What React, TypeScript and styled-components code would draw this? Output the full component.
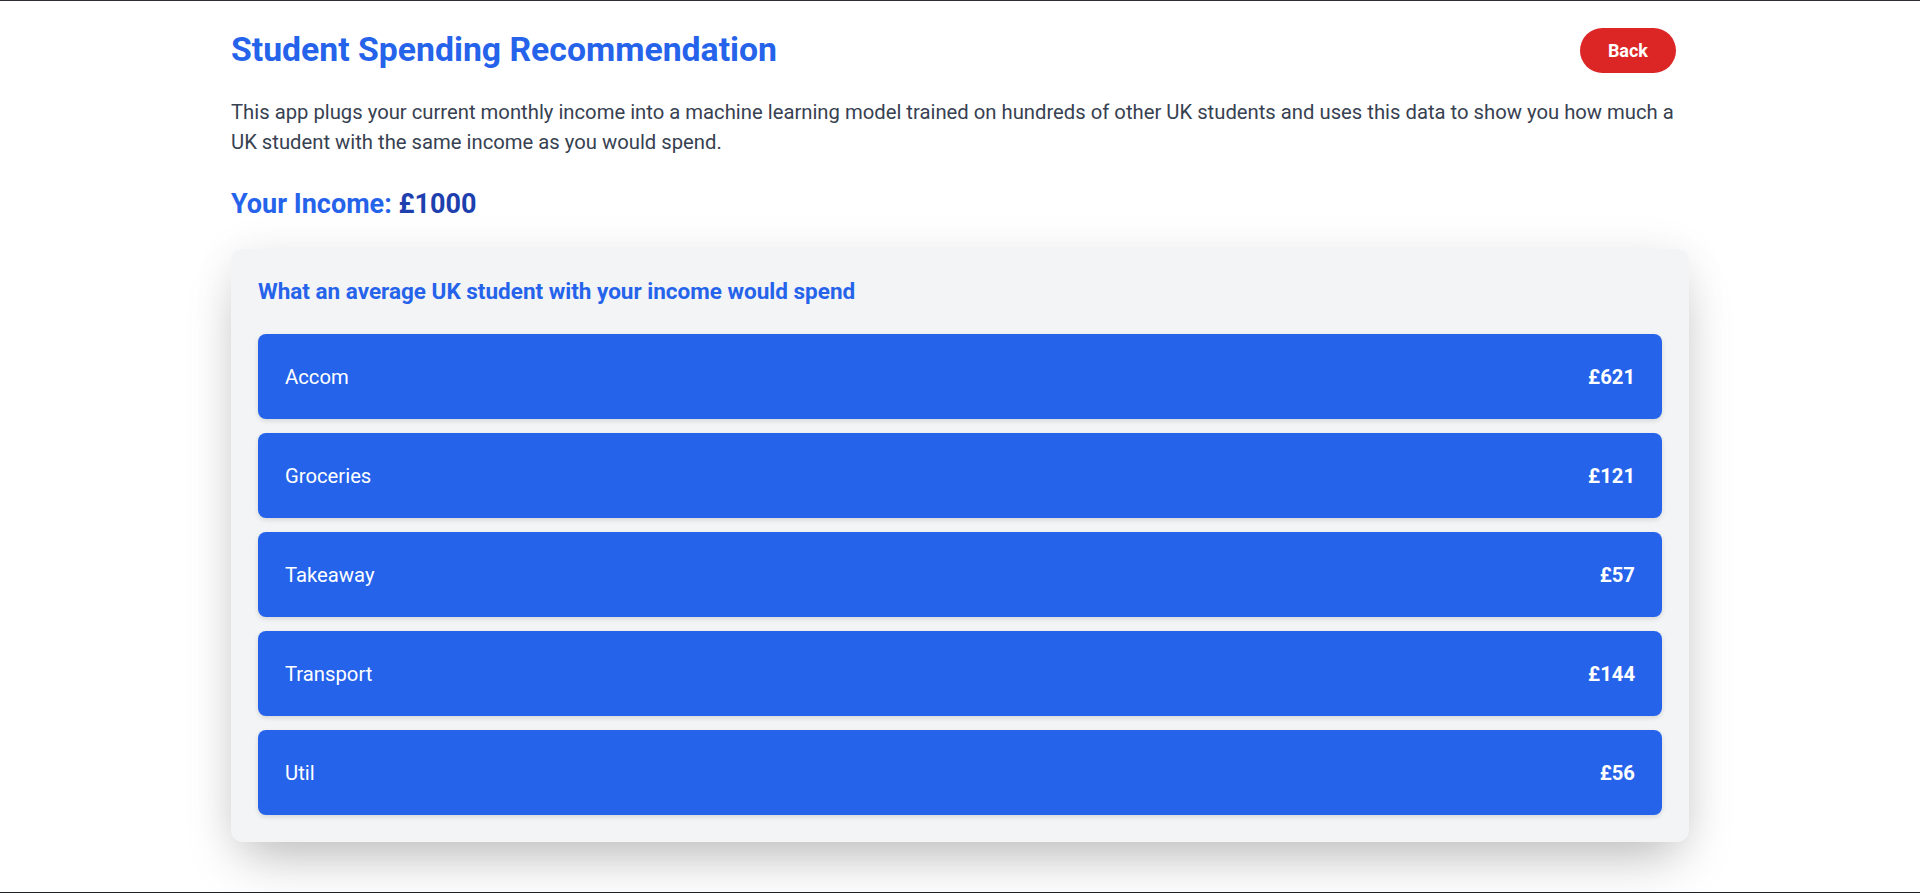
import styled, { createGlobalStyle } from "styled-components";

const GlobalStyle = createGlobalStyle`
  html, body {
    margin: 0;
    padding: 0;
    background: #ffffff;
  }
  body {
    font-family: Roboto, "Liberation Sans", Arial, sans-serif;
  }
  * {
    box-sizing: border-box;
  }
`

const Screen = styled.div`
  min-height: 893px;
  border-top: 1px solid #2b2f33;
  border-bottom: 1px solid #1e2328;
  padding: 27px 0 0;
`

const Wrapper = styled.main`
  width: 1458px;
  margin: 0 auto;
`

const Intro = styled.section`
  padding-right: 13px;
`

const TopBar = styled.header`
  display: flex;
  align-items: center;
  justify-content: space-between;
  height: 45px;
`

const Title = styled.h1`
  margin: 0;
  font-size: 33.75px;
  line-height: 40.5px;
  font-weight: 700;
  color: #2563eb;
`

const BackButton = styled.button`
  height: 45px;
  padding: 0 28px;
  border: none;
  border-radius: 9999px;
  background: #dc2626;
  color: #ffffff;
  font-family: inherit;
  font-size: 18px;
  font-weight: 700;
  cursor: pointer;
`

const Blurb = styled.p`
  margin: 24px 0 0;
  font-size: 20.25px;
  line-height: 30px;
  color: #374151;
`

const Income = styled.h2`
  margin: 29px 0 0;
  font-size: 27px;
  line-height: 36px;
  font-weight: 700;
  color: #2563eb;

  span {
    color: #1e40af;
  }
`

const Card = styled.section`
  margin-top: 27px;
  padding: 27px;
  background: #f3f4f6;
  border-radius: 12px;
  box-shadow: 0 25px 50px -12px rgba(0, 0, 0, 0.25), 0 0 45px rgba(0, 0, 0, 0.06);
`

const CardTitle = styled.h3`
  margin: 0;
  font-size: 22.5px;
  line-height: 31.5px;
  font-weight: 700;
  color: #2563eb;
`

const List = styled.ul`
  list-style: none;
  margin: 26.5px 0 0;
  padding: 0;
  display: flex;
  flex-direction: column;
  gap: 14px;
`

const Row = styled.li`
  display: flex;
  align-items: center;
  justify-content: space-between;
  height: 85px;
  padding: 0 27px;
  background: #2563eb;
  border-radius: 8px;
  box-shadow: 0 2px 5px rgba(0, 0, 0, 0.12);
  color: #ffffff;
  font-size: 20.25px;
`

const Amount = styled.span`
  font-weight: 700;
`

const spending = [
  { label: "Accom", amount: 621 },
  { label: "Groceries", amount: 121 },
  { label: "Takeaway", amount: 57 },
  { label: "Transport", amount: 144 },
  { label: "Util", amount: 56 },
]

export default function App() {
  return (
    <>
      <GlobalStyle />
      <Screen>
        <Wrapper>
          <Intro>
            <TopBar>
              <Title>Student Spending Recommendation</Title>
              <BackButton>Back</BackButton>
            </TopBar>
            <Blurb>
              This app plugs your current monthly income into a machine learning model trained on hundreds of other UK
              students and uses this data to show you how much a UK student with the same income as you would spend.
            </Blurb>
            <Income>
              Your Income: <span>£1000</span>
            </Income>
          </Intro>
          <Card>
            <CardTitle>What an average UK student with your income would spend</CardTitle>
            <List>
              {spending.map(item => (
                <Row key={item.label}>
                  <span>{item.label}</span>
                  <Amount>£{item.amount}</Amount>
                </Row>
              ))}
            </List>
          </Card>
        </Wrapper>
      </Screen>
    </>
  )
}
